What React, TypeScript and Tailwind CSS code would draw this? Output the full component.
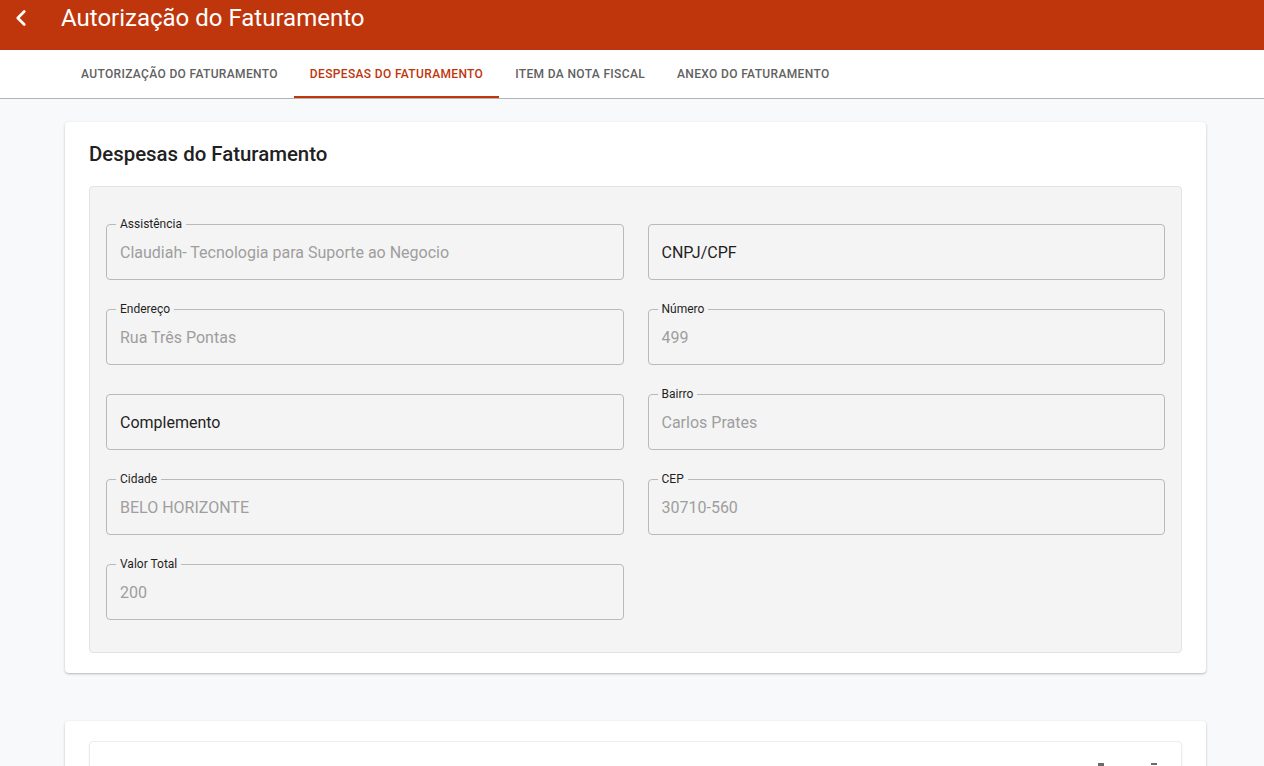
import { ChevronLeft } from "lucide-react";

const tabs = [
  "Autorização do Faturamento",
  "Despesas do Faturamento",
  "Item da Nota Fiscal",
  "Anexo do Faturamento",
];

type Field = { label: string; value?: string };

const fields: Field[] = [
  { label: "Assistência", value: "Claudiah- Tecnologia para Suporte ao Negocio" },
  { label: "CNPJ/CPF" },
  { label: "Endereço", value: "Rua Três Pontas" },
  { label: "Número", value: "499" },
  { label: "Complemento" },
  { label: "Bairro", value: "Carlos Prates" },
  { label: "Cidade", value: "BELO HORIZONTE" },
  { label: "CEP", value: "30710-560" },
  { label: "Valor Total", value: "200" },
];

function OutlinedField({ label, value }: Field) {
  if (!value) {
    return (
      <div className="h-14 rounded border border-[#b9b9b9] px-[13px] pt-[1px] flex items-center text-base text-[#1f1f1f]">
        {label}
      </div>
    );
  }
  return (
    <div className="relative h-14 rounded border border-[#b9b9b9] px-[13px] pt-[1px] flex items-center text-base text-[#9e9e9e]">
      <span className="absolute -top-[8px] left-[9px] bg-[#f4f4f4] px-1 text-xs leading-[14px] text-[#1f1f1f]">
        {label}
      </span>
      {value}
    </div>
  );
}

export default function App() {
  return (
    <div
      className="min-h-screen bg-[#f8f9fb]"
      style={{ fontFamily: "Roboto, 'Liberation Sans', sans-serif" }}
    >
      <header className="h-[50px] bg-[#bf360c] text-white flex items-start">
        <button className="w-[40px] h-9 flex items-center justify-center pl-0.5">
          <ChevronLeft size={26} strokeWidth={2.5} />
        </button>
        <h1 className="ml-[21px] text-[24px] leading-9 font-normal">Autorização do Faturamento</h1>
      </header>

      <nav className="h-[49px] bg-white border-b border-[#b4b4b4] flex pl-[65px]">
        {tabs.map((t, i) => (
          <div
            key={t}
            className={
              i === 1
                ? "px-4 pt-[2px] flex items-center border-b-2 border-[#bf360c] text-[#bf360c] text-[12px] font-medium uppercase tracking-[0.029em]"
                : "px-4 pt-[2px] flex items-center border-b-2 border-transparent text-[#616161] text-[12px] font-medium uppercase tracking-[0.029em]"
            }
          >
            {t}
          </div>
        ))}
      </nav>

      <main className="ml-[65px] mr-[58px] pt-[23px] pb-10 flex flex-col gap-12">
        <section className="bg-white rounded shadow-[0_1px_3px_rgba(0,0,0,0.2),0_1px_1px_rgba(0,0,0,0.08)] px-6 pt-[20px] pb-5">
          <h2 className="text-[20.4px] leading-6 font-medium text-[#212121] mb-[20px]">Despesas do Faturamento</h2>
          <div className="bg-[#f4f4f4] border border-[#e3e3e3] rounded px-4 pt-[37px] pb-[32px] grid grid-cols-2 gap-x-6 gap-y-[29px]">
            {fields.map((f) => (
              <OutlinedField key={f.label} {...f} />
            ))}
          </div>
        </section>

        <section className="bg-white rounded shadow-[0_1px_3px_rgba(0,0,0,0.2),0_1px_1px_rgba(0,0,0,0.08)] px-6 pt-5 pb-5">
          <div className="border border-[#ececec] rounded shadow-[0_1px_2px_rgba(0,0,0,0.08)] h-[200px] pl-6 pr-6 pt-[21px] flex items-start">
            <span className="ml-[190px] text-sm font-medium text-[#444]">Itens</span>
            <div className="ml-auto flex gap-[47px]">
              <div className="w-[6px] h-[14px] bg-[#6b6b6b]" />
              <div className="w-[6px] h-[14px] border-t-2 border-[#6b6b6b]" />
            </div>
          </div>
        </section>
      </main>
    </div>
  );
}
